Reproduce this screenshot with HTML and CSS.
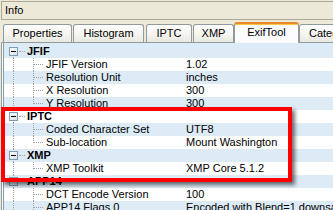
FILE: index.html
```html
<!DOCTYPE html>
<html>
<head>
<meta charset="utf-8">
<link rel="stylesheet" href="styles.css">
</head>
<body>
<div class="app">
  <div class="info">Info</div>
  <div class="tabs">
    <div class="tab t1">Properties</div>
    <div class="tab t2">Histogram</div>
    <div class="tab t3">IPTC</div>
    <div class="tab t4">XMP</div>
    <div class="tab active t5">ExifTool</div>
    <div class="tab t6">Categories</div>
  </div>
  <div class="panel">
    <div class="tree">
      <div class="row grp first"><span class="box"></span><span class="hl"></span><span class="gname">JFIF</span></div>
      <div class="row child"><span class="ln"></span><span class="name">JFIF Version</span><span class="val">1.02</span></div>
      <div class="row child"><span class="ln"></span><span class="name">Resolution Unit</span><span class="val">inches</span></div>
      <div class="row child"><span class="ln"></span><span class="name">X Resolution</span><span class="val">300</span></div>
      <div class="row child last"><span class="ln"></span><span class="name">Y Resolution</span><span class="val">300</span></div>
      <div class="row grp"><span class="box"></span><span class="hl"></span><span class="gname">IPTC</span></div>
      <div class="row child"><span class="ln"></span><span class="name">Coded Character Set</span><span class="val">UTF8</span></div>
      <div class="row child last"><span class="ln"></span><span class="name">Sub-location</span><span class="val">Mount Washington</span></div>
      <div class="row grp"><span class="box"></span><span class="hl"></span><span class="gname">XMP</span></div>
      <div class="row child last"><span class="ln"></span><span class="name">XMP Toolkit</span><span class="val">XMP Core 5.1.2</span></div>
      <div class="row grp"><span class="box"></span><span class="hl"></span><span class="gname">APP14</span></div>
      <div class="row child"><span class="ln"></span><span class="name">DCT Encode Version</span><span class="val">100</span></div>
      <div class="row child"><span class="ln"></span><span class="name">APP14 Flags 0</span><span class="val">Encoded with Blend=1 downsampling</span></div>
    </div>
    <div class="highlight"></div>
  </div>
</div>
</body>
</html>
```
FILE: styles.css
```css
html, body {
  margin: 0;
  padding: 0;
}
body {
  background: #ece9d8;
  font-family: "Liberation Sans", Arial, sans-serif;
  font-size: 11px;
  color: #000;
}
.app {
  width: 333px;
  height: 210px;
  overflow: hidden;
  position: relative;
}
.info {
  margin: 1px 0 0 1px;
  height: 17px;
  line-height: 17px;
  border: 1px solid #aca899;
  border-right: none;
  padding-left: 3px;
}
.tabs {
  display: flex;
  align-items: flex-end;
  height: 22px;
  padding-left: 3px;
  position: relative;
  z-index: 2;
}
.tab {
  box-sizing: border-box;
  height: 18px;
  flex: none;
  border: 1px solid #919b9c;
  border-bottom: none;
  border-radius: 3px 3px 0 0;
  background: linear-gradient(#fefefe, #f4f3ee 60%, #e8e7e0);
  text-align: center;
  line-height: 17px;
  margin-right: 1px;
}
.t1 { width: 69px; }
.t2 { width: 71px; margin-right: 2px; }
.t3 { width: 46px; }
.t4 { width: 41px; margin-right: 0; }
.t5 { width: 65px; margin-right: 0; }
.t6 { width: 60px; text-align: left; padding-left: 9px; }
.tab.active {
  background: #fcfcfe;
  border-top: 2px solid #e68b2c;
  box-shadow: inset 0 1px 0 #ffc83c;
  line-height: 17px;
  margin-bottom: -1px;
  height: 21px;
}
.panel {
  position: relative;
  border-top: 1px solid #919b9c;
  border-left: 1px solid #919b9c;
  margin-left: 1px;
  background: #fcfcfe;
  padding-left: 1px;
  height: 200px;
}
.tree {
  border-left: 1px solid #7f9db9;
  background: #fff;
}
.row {
  position: relative;
  height: 13px;
  line-height: 13px;
  display: flex;
  align-items: center;
  white-space: nowrap;
  overflow: hidden;
}
.row:nth-child(odd) {
  background: #dcebf6;
}
.row.first {
  height: 15px;
  padding-top: 2px;
  box-sizing: border-box;
}
.row::before {
  content: "";
  position: absolute;
  left: 9px;
  top: 0;
  bottom: 0;
  border-left: 1px dotted #a0a0a0;
}
.row.first::before {
  top: 8px;
}
.box {
  position: relative;
  z-index: 1;
  box-sizing: border-box;
  width: 9px;
  height: 9px;
  margin-left: 5px;
  border: 1px solid #7f9db9;
  background: linear-gradient(135deg, #ffffff, #d8dde6);
  flex: none;
}
.box::after {
  content: "";
  position: absolute;
  left: 1px;
  top: 3px;
  width: 5px;
  height: 1px;
  background: #000;
}
.hl {
  width: 6px;
  border-top: 1px dotted #a0a0a0;
  margin-left: 1px;
  flex: none;
}
.gname {
  font-weight: bold;
  margin-left: 2px;
}
.child {
  padding-left: 42px;
}
.child::after {
  content: "";
  position: absolute;
  left: 29px;
  top: 0;
  bottom: 0;
  border-left: 1px dotted #a0a0a0;
}
.child.last::after {
  bottom: 6px;
}
.ln {
  position: absolute;
  left: 30px;
  top: 6px;
  width: 9px;
  border-top: 1px dotted #a0a0a0;
}
.name {
  flex: 0 0 140px;
}
.val {
  flex: none;
}
.highlight {
  position: absolute;
  left: -1px;
  top: 64px;
  width: 283px;
  height: 67px;
  border: 4px solid #ff0000;
  box-shadow: 3px 3px 4px rgba(0, 0, 0, 0.55);
  z-index: 3;
}
```
